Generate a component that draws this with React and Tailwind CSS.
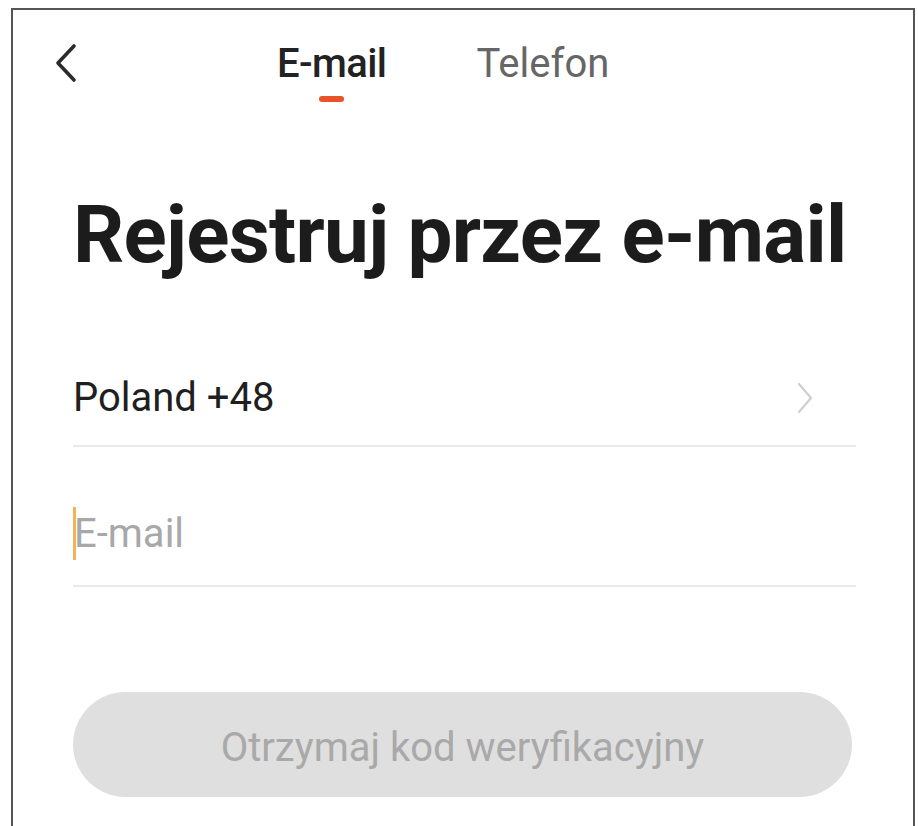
import React from 'react';

const BackIcon = () => (
  <svg width="26" height="40" viewBox="0 0 26 40" fill="none">
    <polyline points="21,3 5,20 21,37" stroke="#2b2b2b" strokeWidth="3.6" strokeLinecap="round" strokeLinejoin="round" />
  </svg>
);

const ChevronRight = () => (
  <svg width="18" height="32" viewBox="0 0 18 32" fill="none">
    <polyline points="3,2 15,16 3,30" stroke="#cfcfcf" strokeWidth="2.2" strokeLinecap="round" strokeLinejoin="round" />
  </svg>
);

export default function App() {
  return (
    <div className="w-[918px] h-[826px] overflow-hidden bg-white pl-[11px] pt-[8px] font-['Roboto',sans-serif]">
      <div className="w-[904px] h-[840px] border-2 border-b-0 border-[#555555]">
        {/* top bar */}
        <div className="flex items-start pl-[40px] pt-[33px]">
          <BackIcon />
          <div className="ml-[198px] mt-[1px] flex flex-col items-center">
            <span className="text-[40px] leading-[40px] font-medium tracking-[-0.6px] text-[#222222]">E-mail</span>
            <div className="mt-[12px] h-[6px] w-[25px] rounded-full bg-[#e8532a]" />
          </div>
          <span className="ml-[90px] mt-[1px] text-[40px] leading-[40px] text-[#666666]">Telefon</span>
        </div>

        <div className="pl-[60px] pr-[57px]">
          <h1 className="mt-[93px] text-[80px] leading-[80px] font-bold tracking-[-0.7px] text-[#1c1c1c]">
            Rejestruj przez e-mail
          </h1>

          <div className="mt-[103px] flex items-center justify-between pr-[42px]">
            <span className="text-[40px] leading-[40px] text-[#1f1f1f]">Poland +48</span>
            <ChevronRight />
          </div>
          <div className="mt-[27px] h-[2px] bg-[#e9e9e9]" />

          <div className="mt-[60px] flex items-center">
            <div className="h-[53px] w-[3px] bg-[#f0b25c]" />
            <span className="-ml-[2px] text-[40px] leading-[40px] text-[#a8a8a8]">E-mail</span>
          </div>
          <div className="mt-[25px] h-[2px] bg-[#e9e9e9]" />

          <button className="mt-[105px] flex h-[105px] w-[779px] items-center justify-center rounded-full bg-[#dfdfdf] pt-[6px] text-[40px] leading-[40px] text-[#a9a9a9]">
            Otrzymaj kod weryfikacyjny
          </button>
        </div>
      </div>
    </div>
  );
}
